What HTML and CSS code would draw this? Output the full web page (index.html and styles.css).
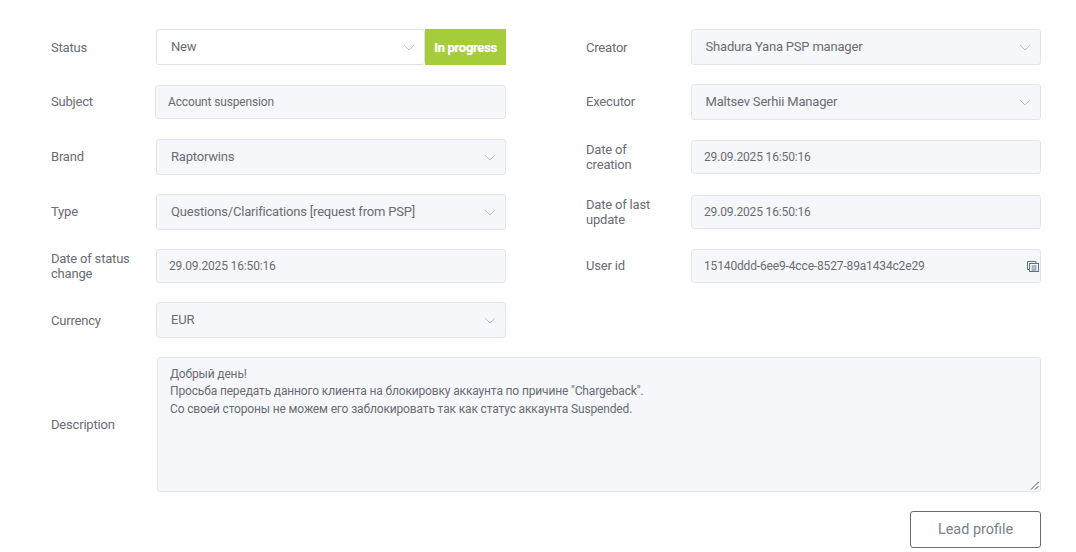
FILE: index.html
```html
<!DOCTYPE html>
<html lang="en">
<head>
<meta charset="utf-8">
<title>Ticket</title>
<link rel="stylesheet" href="styles.css">
</head>
<body>
<main class="page">
  <div class="columns">
    <section class="column">
      <div class="row row-tall">
        <span class="label label-low">Status</span>
        <div class="status-group">
          <div class="select select-white"><span>New</span><svg class="chev" viewBox="0 0 12 7"><path d="M1 1l5 5 5-5"/></svg></div>
          <div class="badge">In progress</div>
        </div>
      </div>
      <div class="row row-tall">
        <span class="label">Subject</span>
        <div class="input input-subject">Account suspension</div>
      </div>
      <div class="row row-tall">
        <span class="label">Brand</span>
        <div class="select"><span>Raptorwins</span><svg class="chev" viewBox="0 0 12 7"><path d="M1 1l5 5 5-5"/></svg></div>
      </div>
      <div class="row row-tall">
        <span class="label">Type</span>
        <div class="select"><span>Questions/Clarifications [request from PSP]</span><svg class="chev" viewBox="0 0 12 7"><path d="M1 1l5 5 5-5"/></svg></div>
      </div>
      <div class="row row-short">
        <span class="label">Date of status change</span>
        <div class="input">29.09.2025 16:50:16</div>
      </div>
      <div class="row row-tall">
        <span class="label label-low">Currency</span>
        <div class="select"><span>EUR</span><svg class="chev" viewBox="0 0 12 7"><path d="M1 1l5 5 5-5"/></svg></div>
      </div>
    </section>
    <section class="column">
      <div class="row row-tall">
        <span class="label label-low">Creator</span>
        <div class="select select-tight"><span>Shadura Yana PSP manager</span><svg class="chev" viewBox="0 0 12 7"><path d="M1 1l5 5 5-5"/></svg></div>
      </div>
      <div class="row row-tall">
        <span class="label">Executor</span>
        <div class="select select-tight"><span>Maltsev Serhii Manager</span><svg class="chev" viewBox="0 0 12 7"><path d="M1 1l5 5 5-5"/></svg></div>
      </div>
      <div class="row row-tall">
        <span class="label">Date of creation</span>
        <div class="input">29.09.2025 16:50:16</div>
      </div>
      <div class="row row-tall">
        <span class="label">Date of last update</span>
        <div class="input">29.09.2025 16:50:16</div>
      </div>
      <div class="row row-short">
        <span class="label">User id</span>
        <div class="input input-copy"><span>15140ddd-6ee9-4cce-8527-89a1434c2e29</span>
          <svg class="copy" viewBox="0 0 12 12"><path d="M2.500 9.500H.5V1.500h8.500V3"/><rect x="2.500" y="3.500" width="9" height="8"/><path d="M4.500 6h5M4.500 8h5M4.500 10h5"/></svg>
        </div>
      </div>
    </section>
  </div>
  <div class="row row-description">
    <span class="label">Description</span>
    <div class="textarea">
      <p>Добрый день!</p>
      <p>Просьба передать данного клиента на блокировку аккаунта по причине "Chargeback".</p>
      <p>Со своей стороны не можем его заблокировать так как статус аккаунта Suspended.</p>
      <svg class="grip" viewBox="0 0 9 9"><path d="M8.500 1L1 8.500M8.500 5L5 8.500"/></svg>
    </div>
  </div>
  <div class="actions"><button class="btn" type="button">Lead profile</button></div>
</main>
</body>
</html>
```
FILE: styles.css
```css
* { box-sizing: border-box; }
html, body { margin: 0; height: 552px; overflow: hidden; background: #fff; }
body { font-family: Roboto, "Liberation Sans", sans-serif; font-size: 13px; letter-spacing: -0.19px; color: #696c74; }
.page { padding: 29px 35px 0 51px; }
.columns { display: grid; grid-template-columns: 455px 455px; column-gap: 80px; }
.column { display: flex; flex-direction: column; }
.row { display: flex; align-items: center; margin-bottom: 19px; }
.row-tall { height: 36px; }
.row-short { height: 34px; }
.label { width: 105px; flex: none; line-height: 15px; padding: 0 20px 1px 0; }
.label-low { padding-bottom: 0; }
.select, .input, .textarea { background: #f6f7fa; border: 1px solid #e4e6ee; border-radius: 3px; }
.select { flex: 1; height: 36px; display: flex; align-items: center; justify-content: space-between; padding: 0 9px 0 14px; }
.select > span { padding-bottom: 2px; }
.select-white { background: #fff; border-color: #dfe1ea; }
.select-tight { padding-left: 13.500px; }
.chev { width: 12px; height: 7px; fill: none; stroke: #c0c4cf; stroke-width: 1; }
.input { flex: 1; height: 34px; line-height: 32px; padding: 0 12px; font-size: 12px; letter-spacing: -0.15px; }
.input-subject { margin-left: -1px; }
.input-copy { display: flex; align-items: center; justify-content: space-between; padding-right: 1px; }
.copy { width: 12px; height: 12px; fill: none; stroke: #5b7480; stroke-width: 1; }
.status-group { flex: 1; display: flex; height: 36px; }
.badge { width: 81px; flex: none; background: #a4cd39; color: #fff; font-weight: 700; font-size: 13px; letter-spacing: -0.3px; text-shadow: 0 0 1px rgba(255, 255, 255, 0.6); display: flex; align-items: center; justify-content: center; }
.row-description { height: 135px; margin-bottom: 0; }
.textarea { position: relative; flex: 1; height: 135px; margin-left: 1px; padding: 8px 12px; font-size: 12px; letter-spacing: -0.15px; line-height: 17.400px; }
.textarea p { margin: 0; }
.grip { position: absolute; right: 1px; bottom: 1px; width: 9px; height: 9px; fill: none; stroke: #555; stroke-width: 1; }
.actions { display: flex; justify-content: flex-end; margin-top: 19px; }
.btn { width: 131px; height: 37px; padding: 0 0 1px; background: #fff; border: 1px solid #6b6b6b; border-radius: 3px; font-family: inherit; font-size: 14.4px; letter-spacing: 0; color: #7a7f8c; }
```
